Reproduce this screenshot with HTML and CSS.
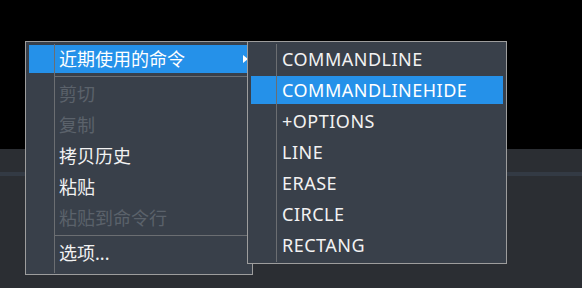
FILE: index.html
```html
<!DOCTYPE html>
<html lang="zh-CN">
<head>
    <meta charset="UTF-8">
    <meta name="viewport" content="width=device-width, initial-scale=1.0">
    <title>命令行右键菜单</title>
    <link rel="stylesheet" href="styles.css">
</head>
<body>
    <div class="screen">
        <div class="canvas"></div>
        <div class="cmdline">
            <div class="cmd-strip"></div>
        </div>
    </div>

    <div class="menu main-menu">
        <div class="item active has-sub">近期使用的命令<span class="arrow"></span></div>
        <div class="sep"></div>
        <div class="item disabled">剪切</div>
        <div class="item disabled">复制</div>
        <div class="item">拷贝历史</div>
        <div class="item">粘贴</div>
        <div class="item disabled">粘贴到命令行</div>
        <div class="sep"></div>
        <div class="item">选项...</div>
    </div>

    <div class="menu sub-menu">
        <div class="item">COMMANDLINE</div>
        <div class="item active">COMMANDLINEHIDE</div>
        <div class="item">+OPTIONS</div>
        <div class="item">LINE</div>
        <div class="item">ERASE</div>
        <div class="item">CIRCLE</div>
        <div class="item">RECTANG</div>
    </div>
</body>
</html>
```

FILE: styles.css
```css
body { margin: 0; width: 582px; height: 288px; overflow: hidden; background: #2b2e33; font-family: "Noto Sans", "Noto Sans CJK SC", sans-serif; font-size: 18px; color: #f2f2f2; position: relative; }
.screen { display: flex; flex-direction: column; height: 100%; }
.canvas { height: 149px; background: #000; }
.cmdline { flex: 1; background: #2b2e33; padding-top: 23px; }
.cmd-strip { height: 4px; background: #333a44; }

.menu { position: absolute; top: 41px; background: #39404a; border: 1px solid #9d9d9d; padding: 3px; box-sizing: border-box; }
.menu::before { content: ""; position: absolute; top: 2px; bottom: 1px; width: 1px; background: #6b6e72; z-index: 1; }
.main-menu { left: 25px; width: 228px; height: 234px; }
.main-menu::before { left: 28px; }
.sub-menu { left: 247px; width: 260px; height: 223px; z-index: 2; letter-spacing: 0.5px; }
.sub-menu::before { left: 28px; }

.item { height: 28px; line-height: 28px; margin-bottom: 3px; padding-left: 30px; white-space: nowrap; position: relative; }
.sub-menu .item { padding-left: 31px; }
.item:last-child { margin-bottom: 0; }
.item.active { background: #2591e9; color: #fff; }
.item.disabled { color: #5b626b; }
.sep { height: 1px; background: #6b6e72; margin: 2px 0 3px 26px; }
.arrow { position: absolute; right: 1px; top: 10px; width: 0; height: 0; border-top: 4.5px solid transparent; border-bottom: 4.5px solid transparent; border-left: 5px solid #fff; }
```
